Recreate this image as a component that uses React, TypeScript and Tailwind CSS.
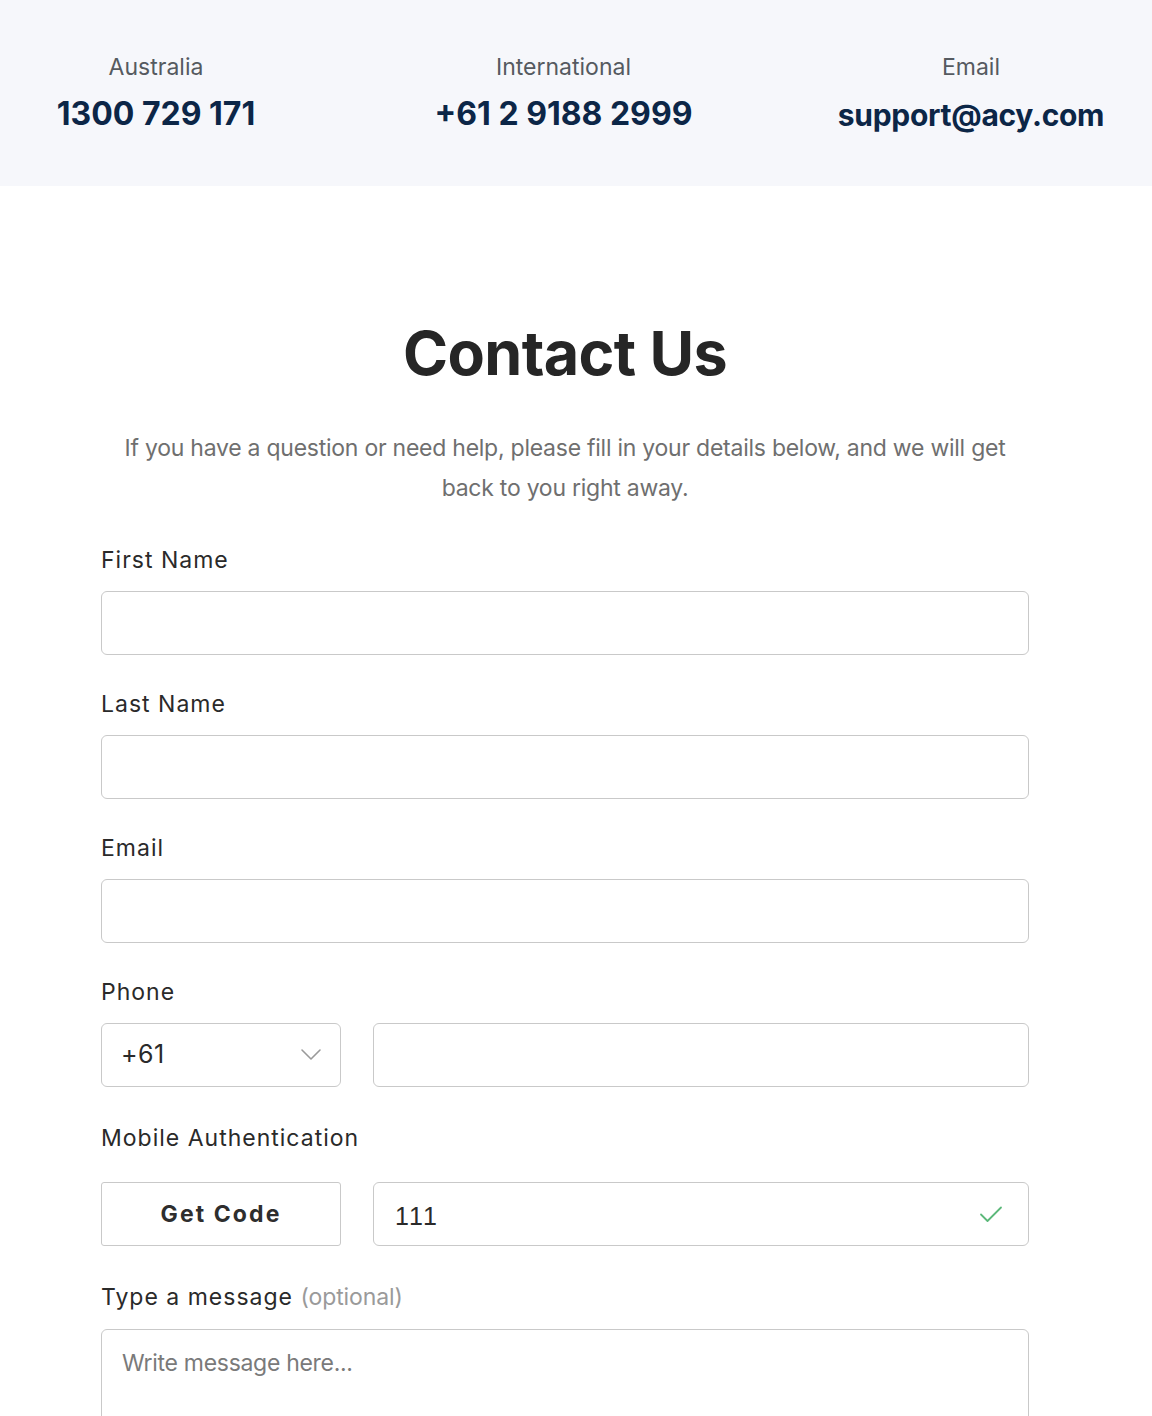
import React from "react";

const Label = ({ children }: { children: React.ReactNode }) => (
  <div className="h-[30px] leading-[30px] text-[23px] tracking-[1px] text-[#2a2a2a]">{children}</div>
);

export default function App() {
  return (
    <div className="min-h-[1416px] bg-white font-['Inter','Liberation_Sans',sans-serif]">
      <header className="h-[186px] bg-[#f6f7fb]">
        <div className="grid grid-cols-[312px_312px_312px] gap-x-[95.5px] pt-[50px]">
          <div className="flex flex-col items-center">
            <div className="text-[23px] leading-[34px] text-[#555a60]">Australia</div>
            <div className="mt-[10px] text-[32px] leading-[40px] font-bold tracking-[0px] text-[#0c2647]">1300 729 171</div>
          </div>
          <div className="flex flex-col items-center">
            <div className="text-[23px] leading-[34px] text-[#555a60]">International</div>
            <div className="mt-[10px] text-[32px] leading-[40px] font-bold tracking-[0px] text-[#0c2647]">+61 2 9188 2999</div>
          </div>
          <div className="flex flex-col items-center">
            <div className="text-[23px] leading-[34px] text-[#555a60]">Email</div>
            <div className="mt-[11px] text-[30px] leading-[40px] font-bold tracking-[-0.3px] text-[#0c2647]">support@acy.com</div>
          </div>
        </div>
      </header>

      <main className="ml-[101px] w-[928px]">
        <h1 className="mt-[131px] text-center text-[61px] leading-[72px] font-bold tracking-[-0.6px] text-[#262626]">Contact Us</h1>
        <p className="mx-auto mt-[39px] w-[900px] text-center text-[23px] leading-[40px] tracking-[-0.25px] text-[#6f6f6f]">
          If you have a question or need help, please fill in your details below, and we will get back to you right away.
        </p>

        <div className="mt-[37px]">
          <Label>First Name</Label>
          <div className="mt-4 h-16 rounded-[6px] border border-[#c9c9c9] bg-white" />
        </div>
        <div className="mt-[34px]">
          <Label>Last Name</Label>
          <div className="mt-4 h-16 rounded-[6px] border border-[#c9c9c9] bg-white" />
        </div>
        <div className="mt-[34px]">
          <Label>Email</Label>
          <div className="mt-4 h-16 rounded-[6px] border border-[#c9c9c9] bg-white" />
        </div>
        <div className="mt-[34px]">
          <Label>Phone</Label>
          <div className="mt-4 flex gap-8">
            <div className="flex h-16 w-[240px] items-center justify-between rounded-[6px] border border-[#c9c9c9] bg-white pl-[19px] pr-[18px]">
              <span className="text-[25px] tracking-[0.5px] text-[#2a2a2a]">+61</span>
              <svg width="22" height="14" viewBox="0 0 22 14" fill="none">
                <path d="M2 2l9 9 9-9" stroke="#9a9a9a" strokeWidth="1.6" strokeLinecap="round" strokeLinejoin="round" />
              </svg>
            </div>
            <div className="h-16 flex-1 rounded-[6px] border border-[#c9c9c9] bg-white" />
          </div>
        </div>
        <div className="mt-[36px]">
          <Label>Mobile Authentication</Label>
          <div className="mt-[29px] flex gap-8">
            <div className="flex h-16 w-[240px] items-center justify-center rounded-[3px] border border-[#c9c9c9] bg-white text-[23px] font-bold tracking-[2.1px] text-[#2e2e2e]">
              Get Code
            </div>
            <div className="flex h-16 flex-1 items-center justify-between rounded-[6px] border border-[#c9c9c9] bg-white pl-[21px] pr-[25px]">
              <span className="pt-[6px] font-['Liberation_Sans',sans-serif] text-[25px] tracking-[2px] text-[#2a2a2a]">111</span>
              <svg width="24" height="18" viewBox="0 0 24 18" fill="none">
                <path d="M2 9.5l6.5 6.5L22 2.5" stroke="#5cb87a" strokeWidth="1.8" strokeLinecap="round" strokeLinejoin="round" />
              </svg>
            </div>
          </div>
        </div>
        <div className="mt-[36px]">
          <Label>
            Type a message <span className="text-[#9a9a9a] tracking-[-0.1px]">(optional)</span>
          </Label>
          <div className="mt-[17px] h-[160px] rounded-t-[6px] border border-[#c9c9c9] bg-white px-[20px] pt-[16px] text-[23px] tracking-[-0.3px] text-[#7a7a7a]">
            Write message here...
          </div>
        </div>
      </main>
    </div>
  );
}
